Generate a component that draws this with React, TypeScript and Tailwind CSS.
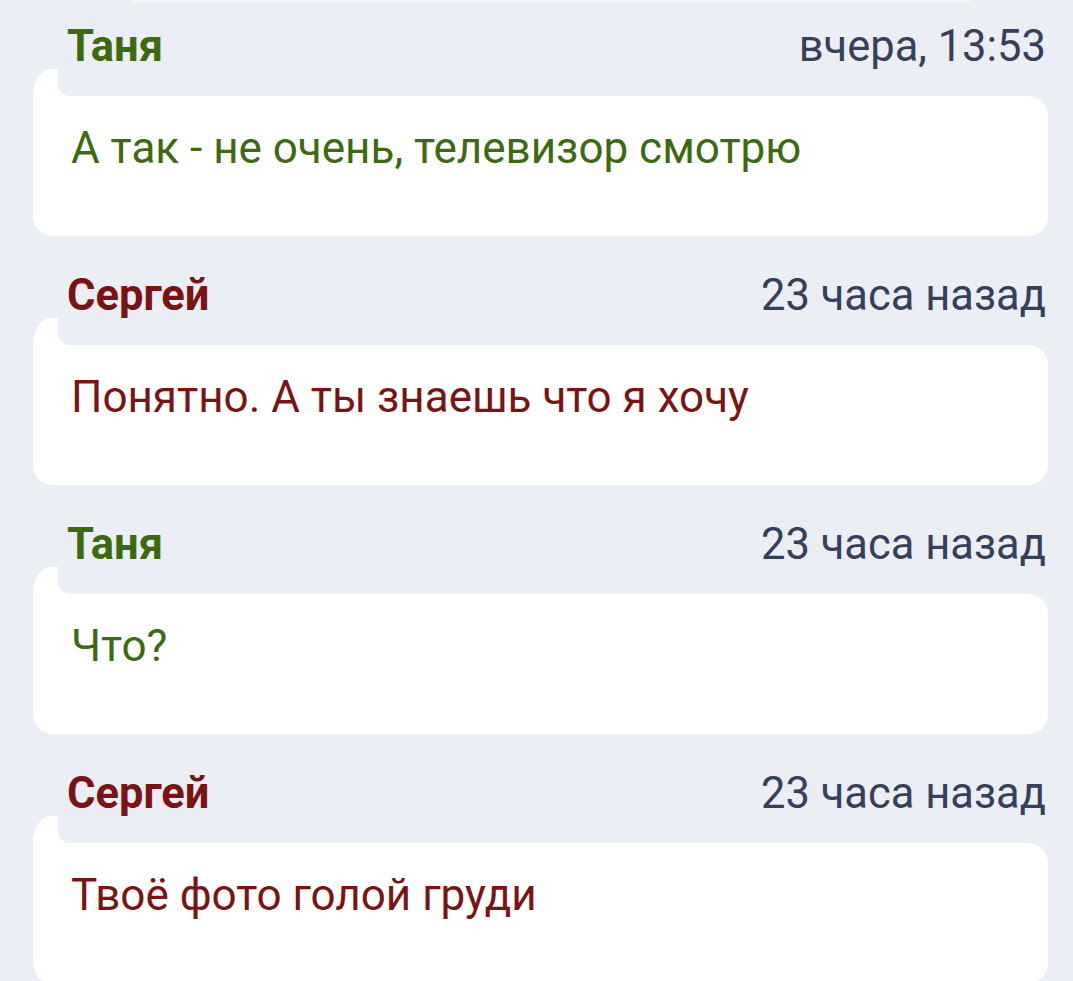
const messages = [
  { author: 'Таня', side: 'her', time: 'вчера, 13:53', text: 'А так - не очень, телевизор смотрю' },
  { author: 'Сергей', side: 'him', time: '23 часа назад', text: 'Понятно. А ты знаешь что я хочу' },
  { author: 'Таня', side: 'her', time: '23 часа назад', text: 'Что?' },
  { author: 'Сергей', side: 'him', time: '23 часа назад', text: 'Твоё фото голой груди' },
];

function Message({ author, side, time, text }: { author: string; side: string; time: string; text: string }) {
  const color = side === 'her' ? 'text-[#3d6a10]' : 'text-[#7a1414]';

  return (
    <div className="flex flex-col">
      {/* header: name + time */}
      <div className="h-[82px] flex items-end justify-between pl-[67px] pr-[27px]">
        <span className={`${color} font-bold text-[43.5px] leading-[44px]`}>{author}</span>
        <span className="text-[#363f5b] text-[43.5px] leading-[44px]">{time}</span>
      </div>

      {/* tab on top-left of bubble */}
      <div className="ml-[33px] mr-[25px] h-[27px] bg-white rounded-tl-[28px_44px]">
        <div className="ml-[25px] h-full bg-[#ebeef4] rounded-bl-[12px]" />
      </div>

      {/* bubble body */}
      <div className="ml-[33px] mr-[25px] h-[140px] bg-white rounded-tr-[20px] rounded-b-[20px] pl-[38px] pt-[26px]">
        <p className={`${color} text-[44px] leading-[52px]`}>{text}</p>
      </div>
    </div>
  );
}

export default function App() {
  return (
    <div className="w-[1073px] h-[981px] overflow-hidden bg-[#ebeef4] font-['Roboto',sans-serif]">
      <div className="h-[2px] ml-[133px] mr-[103px] bg-[#f6f7f9]" />
      <div className="-mt-[15px] flex flex-col">
        {messages.map((m, i) => (
          <Message key={i} {...m} />
        ))}
      </div>
    </div>
  );
}
